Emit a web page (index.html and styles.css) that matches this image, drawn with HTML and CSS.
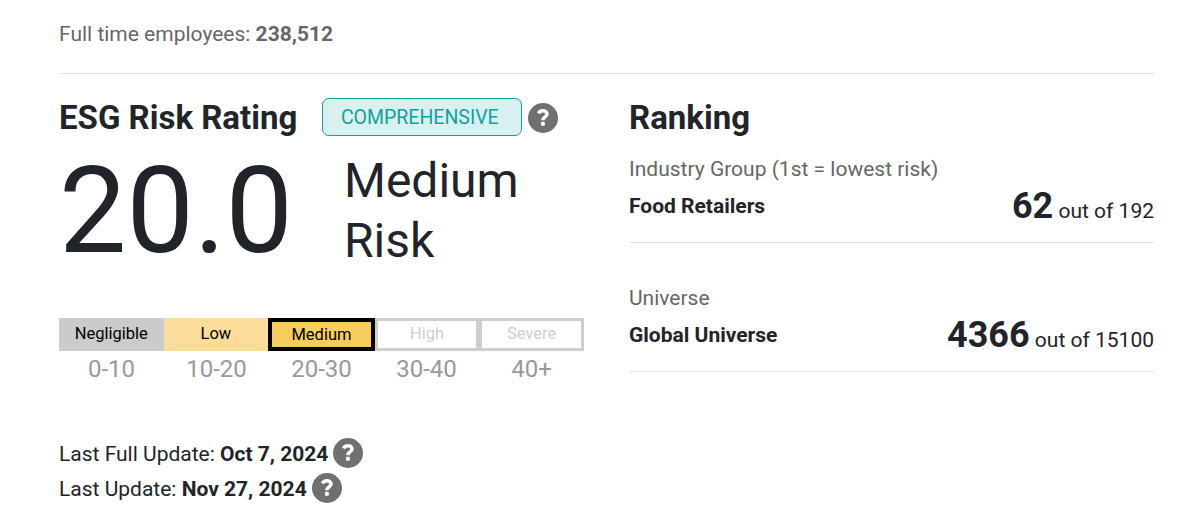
FILE: index.html
```html
<!DOCTYPE html>
<html lang="en">
<head>
    <meta charset="UTF-8">
    <meta name="viewport" content="width=device-width, initial-scale=1.0">
    <title>ESG Risk Rating</title>
    <link rel="stylesheet" href="styles.css">
</head>
<body>
    <svg class="icons">
        <symbol id="question" viewBox="0 0 30 30">
            <circle cx="15" cy="15" r="15" fill="#707070"/>
            <path d="M10.4 10.4C11.3 8.6 12.9 7.8 14.9 7.8c2.4 0 4.1 1.3 4.1 3.2 0 3-4.1 2.9-4.1 6.3" fill="none" stroke="#fff" stroke-width="3.5"/>
            <rect x="12.9" y="18.8" width="4" height="4" rx="1.3" fill="#fff"/>
        </symbol>
    </svg>
    <div class="container">
        <p class="employees">Full time employees: <strong>238,512</strong></p>

        <div class="row">
            <section class="rating">
                <div class="rating-header">
                    <h2>ESG Risk Rating</h2>
                    <span class="badge">COMPREHENSIVE</span>
                    <svg class="help"><use href="#question"/></svg>
                </div>
                <div class="score-row">
                    <div class="score">20.0</div>
                    <div class="score-text">Medium Risk</div>
                </div>
                <div class="scale">
                    <div class="level negligible"><span>Negligible</span></div>
                    <div class="level low"><span>Low</span></div>
                    <div class="level medium"><span>Medium</span></div>
                    <div class="level off"><span>High</span></div>
                    <div class="level off"><span>Severe</span></div>
                </div>
                <div class="ranges">
                    <span>0-10</span>
                    <span>10-20</span>
                    <span>20-30</span>
                    <span>30-40</span>
                    <span>40+</span>
                </div>
                <div class="updates">
                    <div class="update">Last Full Update:&nbsp;<strong>Oct 7, 2024</strong><svg class="help"><use href="#question"/></svg></div>
                    <div class="update">Last Update:&nbsp;<strong>Nov 27, 2024</strong><svg class="help"><use href="#question"/></svg></div>
                </div>
            </section>

            <section class="ranking">
                <h2>Ranking</h2>
                <div class="rank">
                    <div class="rank-label">Industry Group (1st = lowest risk)</div>
                    <div class="rank-row">
                        <strong class="rank-name">Food Retailers</strong>
                        <span class="rank-value"><strong>62</strong> out of 192</span>
                    </div>
                </div>
                <div class="rank">
                    <div class="rank-label">Universe</div>
                    <div class="rank-row">
                        <strong class="rank-name">Global Universe</strong>
                        <span class="rank-value"><strong>4366</strong> out of 15100</span>
                    </div>
                </div>
            </section>
        </div>
    </div>
</body>
</html>
```
FILE: styles.css
```css
* {
    box-sizing: border-box;
}
body {
    margin: 0;
    background: #fff;
    color: #212529;
    font-family: Roboto, Arial, sans-serif;
    font-size: 21px;
    line-height: 30px;
    overflow: hidden;
}
.icons {
    display: none;
}
.container {
    width: 1095px;
    margin-left: 59px;
    padding-top: 19px;
}
strong {
    font-weight: 700;
}
.employees {
    margin: 0;
    height: 55px;
    color: #666;
    border-bottom: 1px solid #e2e2e2;
}
.row {
    display: flex;
    justify-content: space-between;
    padding-top: 24px;
}
.rating,
.ranking {
    width: 525px;
}
h2 {
    margin: 0;
    height: 38px;
    font-size: 33px;
    line-height: 40px;
    font-weight: 700;
}
.rating-header {
    display: flex;
    align-items: center;
    height: 38px;
}
.rating-header .help {
    margin: 2px 0 0 6px;
}
.badge {
    width: 200px;
    height: 38px;
    margin-left: 25px;
    padding-right: 5px;
    border: 1px solid #0fa39b;
    border-radius: 7px;
    background: #d9f0f0;
    color: #0fa39b;
    font-size: 19.5px;
    line-height: 37px;
    text-align: center;
}
.help {
    width: 30px;
    height: 30px;
    margin: -2px 0 0 5px;
}
.score-row {
    display: flex;
    height: 182px;
    padding-top: 15px;
}
.score {
    width: 285px;
    font-size: 120px;
    line-height: 121px;
}
.score-text {
    width: 200px;
    font-size: 48px;
    line-height: 60px;
}
.scale {
    display: flex;
    height: 33px;
}
.level {
    width: 105px;
    font-size: 16.5px;
    line-height: 31px;
    text-align: center;
    color: #000;
}
.negligible {
    background: #cbcbcb;
}
.low {
    background: #fbdd99;
}
.medium {
    width: 107px;
    background: #f6cd5c;
    border: 4px solid #000;
    line-height: 25px;
}
.off {
    border: 3px solid #cecece;
    color: #cecece;
    line-height: 25px;
}
.ranges {
    display: flex;
    color: #999;
    font-size: 24px;
    line-height: 36px;
}
.ranges span {
    width: 105px;
    text-align: center;
}
.updates {
    padding-top: 49px;
}
.update {
    display: flex;
    align-items: center;
    height: 35px;
}
.rank {
    height: 129px;
    padding-top: 18px;
}
.rank-label {
    color: #666;
}
.rank-row {
    display: flex;
    justify-content: space-between;
    height: 59px;
    border-bottom: 1px solid #e2e2e2;
}
.rank-name {
    font-size: 21px;
    padding-top: 7px;
}
.rank-value {
    padding-top: 1px;
    line-height: 42px;
}
.rank-value strong {
    font-size: 36px;
}
```
